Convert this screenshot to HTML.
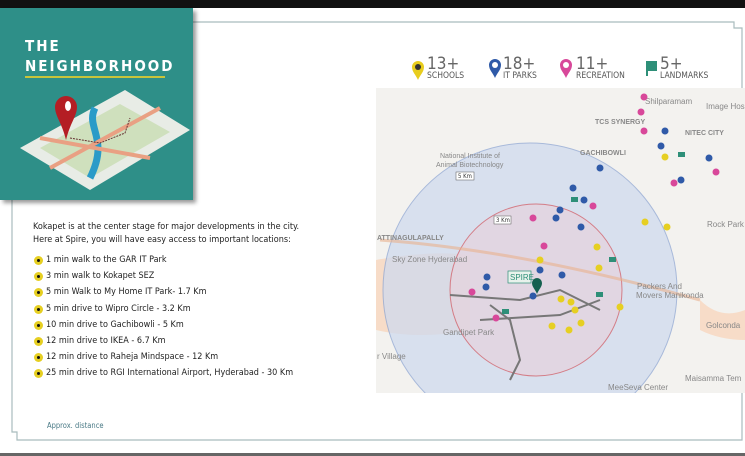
<!DOCTYPE html>
<html><head><meta charset="utf-8"><style>
body{margin:0;width:745px;height:456px;overflow:hidden;background:#fff;font-family:"DejaVu Sans Condensed","Liberation Sans",sans-serif;position:relative}
.top{position:absolute;left:0;top:0;width:745px;height:8px;background:#111}
.bot{position:absolute;left:0;top:453px;width:745px;height:3px;background:#666}
.teal{position:absolute;left:0;top:8px;width:193px;height:192px;background:#2e8f88;box-shadow:3px 3px 4px rgba(0,0,0,.4)}
.t1{position:absolute;left:25px;top:36px;color:#fff;font-weight:bold;font-size:15px;letter-spacing:2px;line-height:20px}
.ul{position:absolute;left:25px;top:76px;width:140px;height:2px;background:#c8c43a}
.txt{position:absolute;left:33px;top:221px;font-size:9px;color:#222;line-height:13px}
ul{list-style:none;margin:0;padding:0;position:absolute;left:34px;top:254px;font-size:9px;color:#222}
li{height:16.2px;line-height:12px;position:relative;padding-left:12px}
li:before{content:"";position:absolute;left:0;top:2px;width:9px;height:9px;border-radius:50%;background:#e6cf22}
li:after{content:"";position:absolute;left:3px;top:5px;width:3px;height:3px;border-radius:50%;background:#111}
.ap{position:absolute;left:47px;top:421px;font-size:7.5px;color:#4a7a86}
.leg{position:absolute;top:56px;font-size:17px;color:#666;line-height:16px}
.leg small{display:block;font-size:8.5px;color:#555;line-height:9px}
</style></head><body>
<div class="top"></div>
<svg style="position:absolute;left:0;top:0" width="745" height="456">
<path d="M193 22H734V28H742V440H17V432H12V200" fill="none" stroke="#a9bcbd" stroke-width="1.2"/>
</svg>
<div class="teal"></div>
<div class="t1">THE<br>NEIGHBORHOOD</div>
<div class="ul"></div>
<svg style="position:absolute;left:0;top:8px" width="193" height="192">
<polygon points="20,140 125,82 190,122 90,182" fill="#e8ece6"/>
<polygon points="40,140 120,96 170,124 90,170" fill="#cfe0bd"/>
<path d="M95,100 C85,120 110,130 90,170" stroke="#2a9bc8" stroke-width="7" fill="none"/>
<path d="M50,160 L160,100 M40,130 L150,150" stroke="#e9a083" stroke-width="4" fill="none"/>
<path d="M70,130 L100,135 L125,125 L130,110" stroke="#633" stroke-dasharray="2 1" fill="none"/>
<path d="M66,88 a11,11 0 0 1 11,11 c0,9 -7,16 -11,33 c-4,-17 -11,-24 -11,-33 a11,11 0 0 1 11,-11z" fill="#b41e24"/>
<ellipse cx="68" cy="98" rx="3" ry="5" fill="#fff"/>
</svg>
<div class="txt">Kokapet is at the center stage for major developments in the city.<br>Here at Spire, you will have easy access to important locations:</div>
<ul>
<li>1 min walk to the GAR IT Park</li>
<li>3 min walk to Kokapet SEZ</li>
<li>5 min Walk to My Home IT Park- 1.7 Km</li>
<li>5 min drive to Wipro Circle - 3.2 Km</li>
<li>10 min drive to Gachibowli - 5 Km</li>
<li>12 min drive to IKEA - 6.7 Km</li>
<li>12 min drive to Raheja Mindspace - 12 Km</li>
<li>25 min drive to RGI International Airport, Hyderabad - 30 Km</li>
</ul>
<div class="ap">Approx. distance</div>
<svg style="position:absolute;left:0;top:0" width="745" height="456">
<defs><clipPath id="m"><rect x="376" y="88" width="369" height="305"/></clipPath></defs>
<g><path d="M418,61a6,6 0 0 1 6,6c0,5 -4,8 -6,13c-2,-5 -6,-8 -6,-13a6,6 0 0 1 6,-6z" fill="#e8cd1e"/>
<path d="M495,59a6,6 0 0 1 6,6c0,5 -4,8 -6,13c-2,-5 -6,-8 -6,-13a6,6 0 0 1 6,-6z" fill="#2f5aa8"/>
<path d="M566,59a6,6 0 0 1 6,6c0,5 -4,8 -6,13c-2,-5 -6,-8 -6,-13a6,6 0 0 1 6,-6z" fill="#d8489a"/>
<circle cx="495" cy="65" r="3" fill="#fff"/><circle cx="566" cy="65" r="3" fill="#fff"/><circle cx="418" cy="67" r="3" fill="#333"/>
<path d="M646,61h11v10h-9v5h-2z" fill="#2e8f78"/></g>
<g clip-path="url(#m)">
<rect x="376" y="88" width="369" height="305" fill="#f3f2ef"/>
<path d="M376,260 Q430,250 470,255 L470,330 Q420,340 376,330z" fill="#f7dcc8"/>
<path d="M700,300 Q720,320 745,310 L745,340 Q720,340 700,330z" fill="#f7dcc8"/>
<circle cx="530" cy="290" r="147" fill="#cfdaee" opacity=".75" stroke="#8fa7d3"/>
<circle cx="536" cy="290" r="86" fill="#e6d3de" opacity=".7" stroke="#d2545c"/>
<path d="M450,295 L520,300 L560,290 L600,310 M490,305 L510,320 L520,360 L510,380 M480,320 L560,315 L600,300" stroke="#777" stroke-width="2" fill="none"/>
<path d="M380,240 Q520,250 700,300" stroke="#e9b08e" stroke-width="3" fill="none" opacity=".6"/>
</g>
<rect x="508" y="271" width="23" height="12" fill="#e8f2ec" stroke="#2e8f78" stroke-width=".7"/>
<text x="510" y="280" font-size="8" fill="#2e8f78" font-family="Liberation Sans">SPIRE</text>
<path d="M537,278a5,5 0 0 1 5,5c0,4 -3,6 -5,11c-2,-5 -5,-7 -5,-11a5,5 0 0 1 5,-5z" fill="#14604f"/>
<rect x="456" y="172" width="18" height="8" fill="#fff" stroke="#555" stroke-width=".5"/><text x="458" y="178" font-size="6" fill="#333">5 Km</text>
<rect x="494" y="216" width="17" height="8" fill="#fff" stroke="#555" stroke-width=".5"/><text x="496" y="222" font-size="6" fill="#333">3 Km</text>
<g font-family="Liberation Sans" font-size="7" fill="#888">
<text x="440" y="158">National Institute of</text><text x="436" y="167">Animal Biotechnology</text>
<text x="377" y="240" font-weight="bold">ATTINAGULAPALLY</text>
<text x="392" y="262" font-size="8">Sky Zone Hyderabad</text>
<text x="443" y="335" font-size="8">Gandipet Park</text>
<text x="377" y="359" font-size="8">r Village</text>
<text x="595" y="124" font-weight="bold">TCS SYNERGY</text>
<text x="580" y="155" font-weight="bold">GACHIBOWLI</text>
<text x="685" y="135" font-weight="bold">NITEC CITY</text>
<text x="707" y="227" font-size="8">Rock Park</text>
<text x="637" y="289" font-size="8">Packers And</text><text x="636" y="298" font-size="8">Movers Manikonda</text>
<text x="706" y="328" font-size="8">Golconda</text>
<text x="685" y="381" font-size="8">Maisamma Tem</text>
<text x="608" y="390" font-size="8">MeeSeva Center</text>
<text x="706" y="109" font-size="8">Image Hos</text>
<text x="645" y="104" font-size="8">Shilparamam</text>
</g>
<g fill="#2f5aa8"><circle cx="665" cy="131" r="3.5"/><circle cx="661" cy="146" r="3.5"/><circle cx="709" cy="158" r="3.5"/><circle cx="600" cy="168" r="3.5"/><circle cx="681" cy="180" r="3.5"/><circle cx="573" cy="188" r="3.5"/><circle cx="584" cy="200" r="3.5"/><circle cx="560" cy="210" r="3.5"/><circle cx="556" cy="218" r="3.5"/><circle cx="487" cy="277" r="3.5"/><circle cx="486" cy="287" r="3.5"/><circle cx="540" cy="270" r="3.5"/><circle cx="562" cy="275" r="3.5"/><circle cx="533" cy="296" r="3.5"/><circle cx="581" cy="227" r="3.5"/></g>
<g fill="#d8489a"><circle cx="644" cy="97" r="3.5"/><circle cx="641" cy="112" r="3.5"/><circle cx="644" cy="131" r="3.5"/><circle cx="716" cy="172" r="3.5"/><circle cx="674" cy="183" r="3.5"/><circle cx="593" cy="206" r="3.5"/><circle cx="533" cy="218" r="3.5"/><circle cx="544" cy="246" r="3.5"/><circle cx="472" cy="292" r="3.5"/><circle cx="496" cy="318" r="3.5"/></g>
<g fill="#e6cf22"><circle cx="665" cy="157" r="3.5"/><circle cx="645" cy="222" r="3.5"/><circle cx="597" cy="247" r="3.5"/><circle cx="540" cy="260" r="3.5"/><circle cx="599" cy="268" r="3.5"/><circle cx="561" cy="299" r="3.5"/><circle cx="571" cy="302" r="3.5"/><circle cx="575" cy="310" r="3.5"/><circle cx="552" cy="326" r="3.5"/><circle cx="569" cy="330" r="3.5"/><circle cx="581" cy="323" r="3.5"/><circle cx="620" cy="307" r="3.5"/><circle cx="667" cy="227" r="3.5"/></g>
<g fill="#2e8f78"><rect x="678" y="152" width="7" height="5"/><rect x="571" y="197" width="7" height="5"/><rect x="609" y="257" width="7" height="5"/><rect x="596" y="292" width="7" height="5"/><rect x="502" y="309" width="7" height="5"/></g>
</svg>
<div class="leg" style="left:427px">13+<small>SCHOOLS</small></div>
<div class="leg" style="left:503px">18+<small>IT PARKS</small></div>
<div class="leg" style="left:576px">11+<small>RECREATION</small></div>
<div class="leg" style="left:660px">5+<small>LANDMARKS</small></div>
<div class="bot"></div>
</body></html>
